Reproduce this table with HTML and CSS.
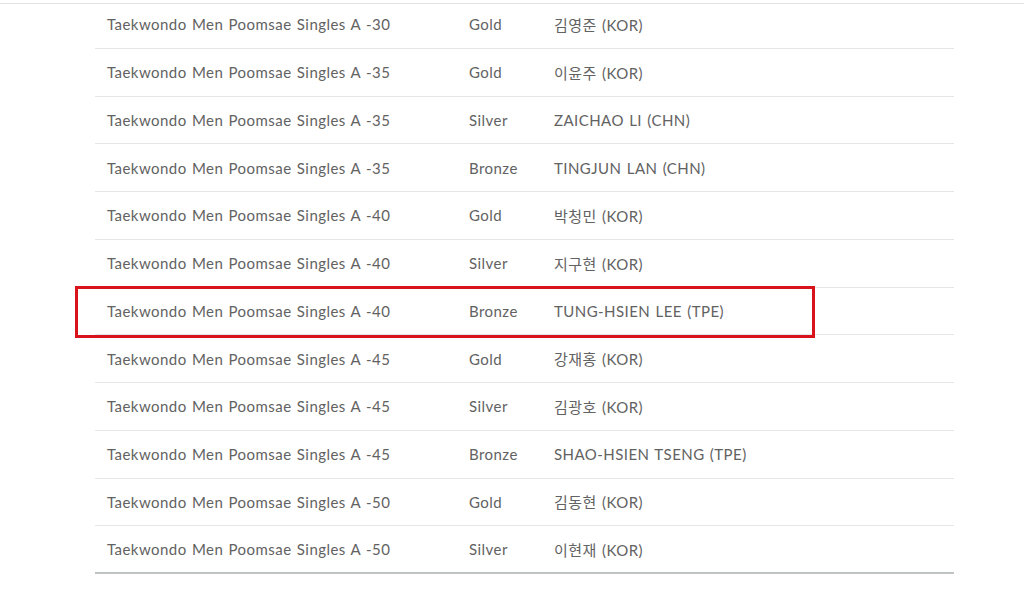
FILE: index.html
```html
<!DOCTYPE html>
<html lang="ko">
<head>
  <meta charset="UTF-8" />
  <title>Medal Results</title>
  <link rel="stylesheet" href="styles.css">
</head>
<body>
  <div class="topline"></div>

  <div class="results">
    <div class="row"><span class="event">Taekwondo Men Poomsae Singles A -30</span><span class="medal">Gold</span><span class="name">김영준 (KOR)</span></div>
    <div class="row"><span class="event">Taekwondo Men Poomsae Singles A -35</span><span class="medal">Gold</span><span class="name">이윤주 (KOR)</span></div>
    <div class="row"><span class="event">Taekwondo Men Poomsae Singles A -35</span><span class="medal">Silver</span><span class="name">ZAICHAO LI (CHN)</span></div>
    <div class="row"><span class="event">Taekwondo Men Poomsae Singles A -35</span><span class="medal">Bronze</span><span class="name">TINGJUN LAN (CHN)</span></div>
    <div class="row"><span class="event">Taekwondo Men Poomsae Singles A -40</span><span class="medal">Gold</span><span class="name">박청민 (KOR)</span></div>
    <div class="row"><span class="event">Taekwondo Men Poomsae Singles A -40</span><span class="medal">Silver</span><span class="name">지구현 (KOR)</span></div>
    <div class="row marked"><span class="event">Taekwondo Men Poomsae Singles A -40</span><span class="medal">Bronze</span><span class="name">TUNG-HSIEN LEE (TPE)</span></div>
    <div class="row"><span class="event">Taekwondo Men Poomsae Singles A -45</span><span class="medal">Gold</span><span class="name">강재홍 (KOR)</span></div>
    <div class="row"><span class="event">Taekwondo Men Poomsae Singles A -45</span><span class="medal">Silver</span><span class="name">김광호 (KOR)</span></div>
    <div class="row"><span class="event">Taekwondo Men Poomsae Singles A -45</span><span class="medal">Bronze</span><span class="name">SHAO-HSIEN TSENG (TPE)</span></div>
    <div class="row"><span class="event">Taekwondo Men Poomsae Singles A -50</span><span class="medal">Gold</span><span class="name">김동현 (KOR)</span></div>
    <div class="row last"><span class="event">Taekwondo Men Poomsae Singles A -50</span><span class="medal">Silver</span><span class="name">이현재 (KOR)</span></div>
  </div>
</body>
</html>
```

FILE: styles.css
```css
body {
  margin: 0;
  background: #fff;
  font-family: Lato, "Noto Sans CJK KR", sans-serif;
  font-size: 15px;
  letter-spacing: 0.45px;
  word-spacing: 1px;
  color: #626262;
}
.topline {
  position: absolute;
  top: 3px;
  left: 0;
  right: 0;
  height: 1px;
  background: #e3e3e3;
}
.results {
  width: 859px;
  margin-left: 95px;
  padding-top: 1px;
}
.row {
  position: relative;
  display: grid;
  grid-template-columns: 362px 85px 1fr;
  align-items: center;
  box-sizing: border-box;
  height: 47.75px;
  padding-left: 12px;
  border-bottom: 1px solid #e6e6e6;
}
.row.last {
  border-bottom: 2px solid #bfc3c3;
}
.marked::after {
  content: "";
  position: absolute;
  left: -20px;
  top: -2px;
  width: 734px;
  height: 46px;
  border: 3px solid #d9131c;
}
```
